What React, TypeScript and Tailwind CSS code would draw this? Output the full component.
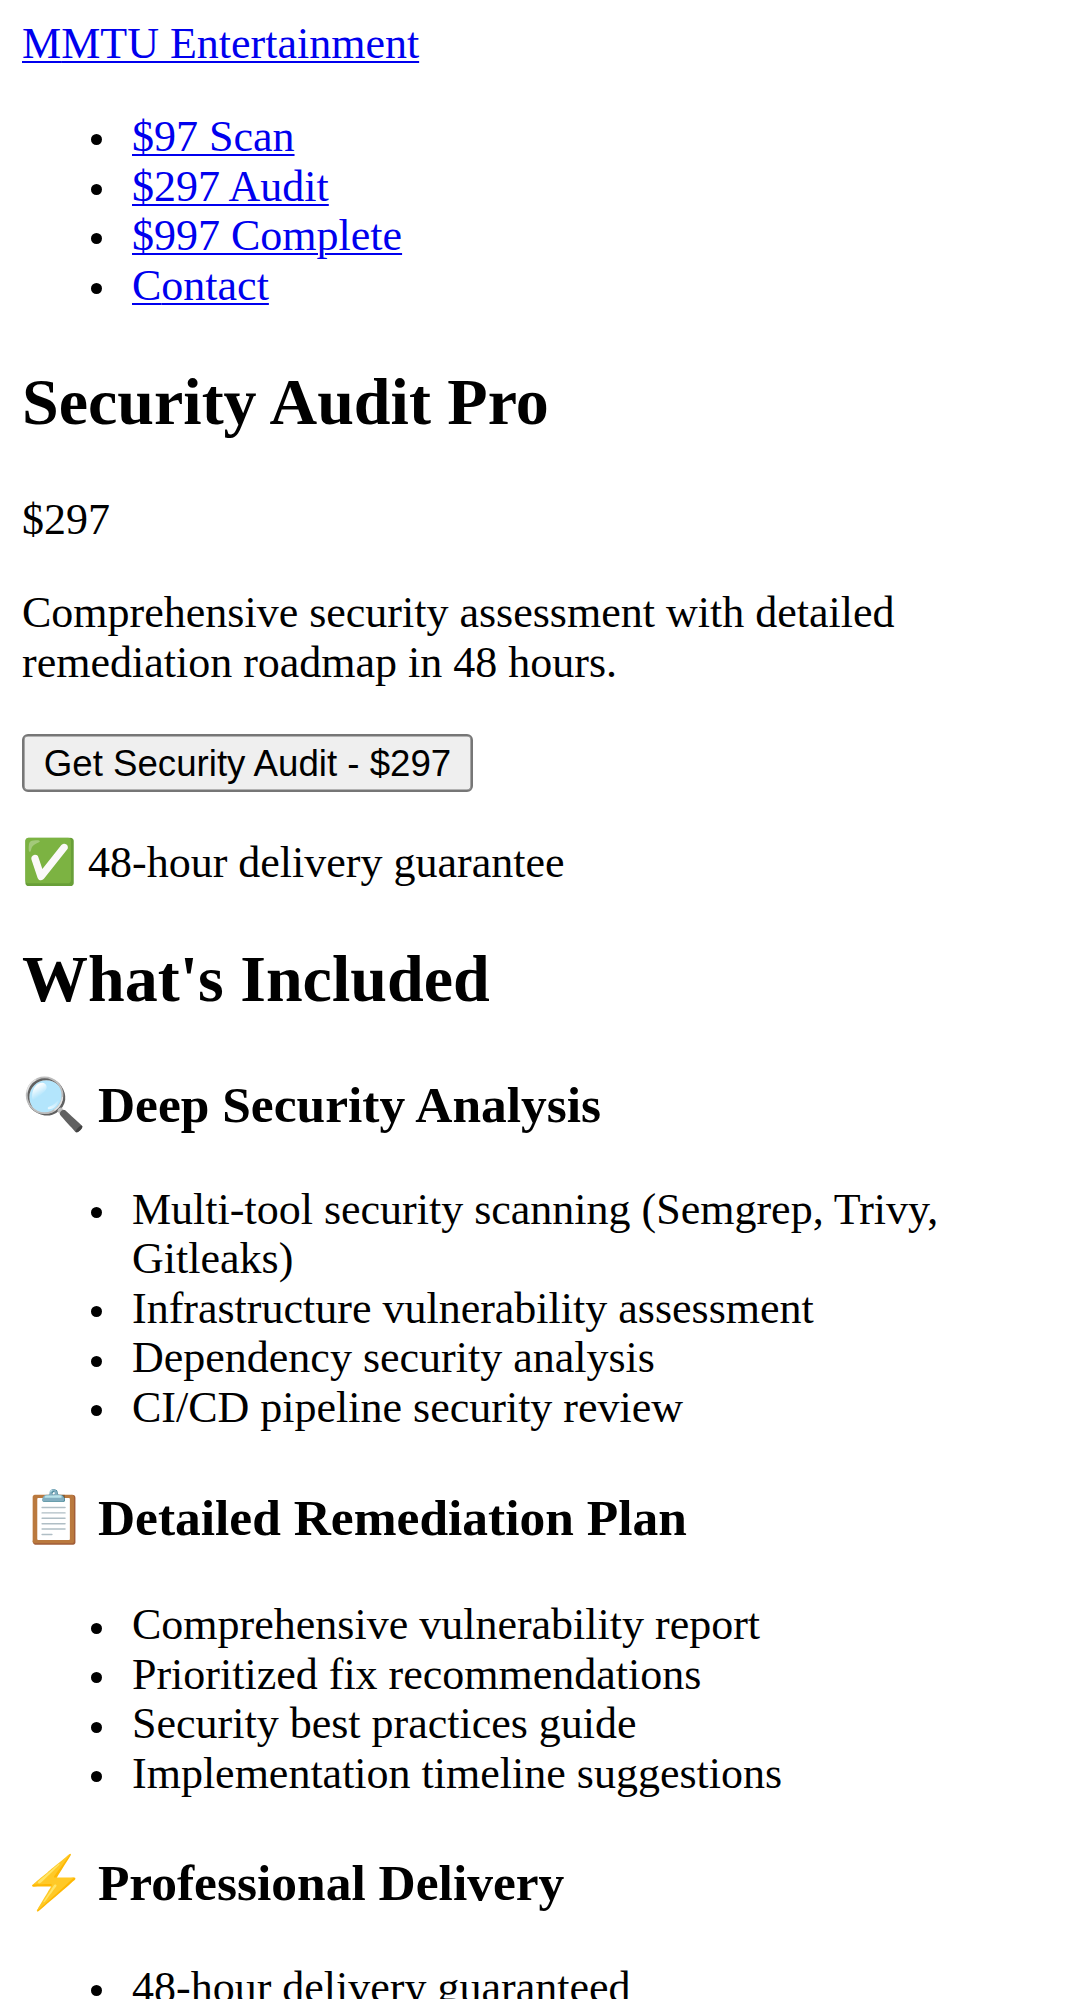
import React from "react";

const nav = ["$97 Scan", "$297 Audit", "$997 Complete", "Contact"];

const sections = [
  {
    icon: "🔍",
    title: "Deep Security Analysis",
    heading: "mt-[60px] mb-[50.5px]",
    items: [
      "Multi-tool security scanning (Semgrep, Trivy, Gitleaks)",
      "Infrastructure vulnerability assessment",
      "Dependency security analysis",
      "CI/CD pipeline security review",
    ],
  },
  {
    icon: "📋",
    title: "Detailed Remediation Plan",
    heading: "mt-[56.5px] mb-[54px]",
    items: [
      "Comprehensive vulnerability report",
      "Prioritized fix recommendations",
      "Security best practices guide",
      "Implementation timeline suggestions",
    ],
  },
  {
    icon: "⚡",
    title: "Professional Delivery",
    heading: "mt-[56px] mb-[50.5px]",
    items: ["48-hour delivery guaranteed"],
  },
];

function BulletList({ children }: { children: React.ReactNode }) {
  return <ul className="my-[44px] pl-[110px]">{children}</ul>;
}

function Bullet({ children }: { children: React.ReactNode }) {
  return (
    <li className="flex before:mt-[22.4px] before:mr-[30px] before:-ml-[41px] before:size-[11px] before:shrink-0 before:rounded-full before:bg-black before:content-['']">
      <span>{children}</span>
    </li>
  );
}

// The underline runs straight through the first character and skips later descenders.
function Link({ label }: { label: string }) {
  return (
    <a href="#" className="text-[#0000ee] underline decoration-[2.4px] underline-offset-[3px]">
      <span className="[text-decoration-skip-ink:none]">{label.slice(0, 1)}</span>
      {label.slice(1)}
    </a>
  );
}

export default function App() {
  return (
    <div className="h-[1999px] overflow-hidden bg-white px-[22px] pt-[18.6px] font-['Liberation_Serif',serif] text-[44px] leading-[49.5px] text-black">
      <nav>
        <Link label="MMTU Entertainment" />
        <BulletList>
          {nav.map((label) => (
            <Bullet key={label}>
              <Link label={label} />
            </Bullet>
          ))}
        </BulletList>
      </nav>
      <h1 className="mt-[55.2px] mb-[55.3px] text-[66px] leading-[74.25px] font-bold">Security Audit Pro</h1>
      <div>$297</div>
      <p className="mt-[43.8px] mb-[46.7px]">
        Comprehensive security assessment with detailed remediation roadmap in 48 hours.
      </p>
      <button className="block h-[58px] w-[451px] rounded-[6px] border-2 border-[#767676] bg-[#efefef] pt-[1px] font-['Liberation_Sans',sans-serif] text-[36.67px] leading-[41px] whitespace-nowrap shadow-[inset_0_0_0_0.6px_#767676]">
        Get Security Audit - $297
      </button>
      <p className="mt-[46px] mb-[44px]">✅ 48-hour delivery guarantee</p>
      <h2 className="mt-[54.8px] text-[66px] leading-[74.25px] font-bold">What's Included</h2>
      {sections.map((section) => (
        <section key={section.title}>
          <h3 className={`${section.heading} text-[51.48px] leading-[57.75px] font-bold`}>
            <span className="-mr-px">{section.icon}</span> {section.title}
          </h3>
          <BulletList>
            {section.items.map((item) => (
              <Bullet key={item}>{item}</Bullet>
            ))}
          </BulletList>
        </section>
      ))}
    </div>
  );
}
